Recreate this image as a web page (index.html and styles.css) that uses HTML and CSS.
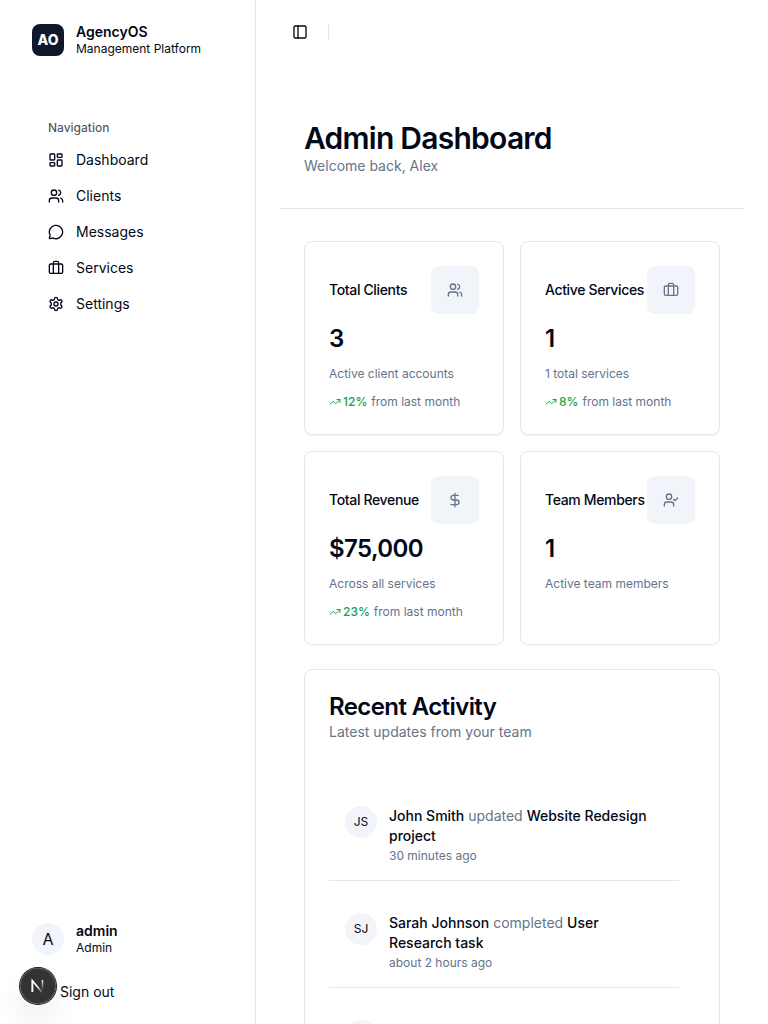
FILE: index.html
```html
<!DOCTYPE html>
<html lang="en">
<head>
<meta charset="utf-8">
<title>AgencyOS</title>
<link rel="stylesheet" href="styles.css">
</head>
<body>
<svg class="sprite" aria-hidden="true">
  <symbol id="dashboard" viewBox="0 0 24 24"><rect width="7" height="9" x="3" y="3" rx="1"/><rect width="7" height="5" x="14" y="3" rx="1"/><rect width="7" height="9" x="14" y="12" rx="1"/><rect width="7" height="5" x="3" y="16" rx="1"/></symbol>
  <symbol id="users" viewBox="0 0 24 24"><path d="M16 21v-2a4 4 0 0 0-4-4H6a4 4 0 0 0-4 4v2"/><circle cx="9" cy="7" r="4"/><path d="M22 21v-2a4 4 0 0 0-3-3.87"/><path d="M16 3.13a4 4 0 0 1 0 7.75"/></symbol>
  <symbol id="message" viewBox="0 0 24 24"><path d="M2.992 16.342a2 2 0 0 1 .094 1.167l-1.065 3.290a1 1 0 0 0 1.236 1.168l3.413-.998a2 2 0 0 1 1.099.092 10 10 0 1 0-4.777-4.719"/></symbol>
  <symbol id="briefcase" viewBox="0 0 24 24"><path d="M16 20V4a2 2 0 0 0-2-2h-4a2 2 0 0 0-2 2v16"/><rect width="20" height="14" x="2" y="6" rx="2"/></symbol>
  <symbol id="settings" viewBox="0 0 24 24"><path d="M12.22 2h-.44a2 2 0 0 0-2 2v.18a2 2 0 0 1-1 1.73l-.43.25a2 2 0 0 1-2 0l-.15-.08a2 2 0 0 0-2.73.73l-.22.38a2 2 0 0 0 .73 2.73l.15.1a2 2 0 0 1 1 1.72v.51a2 2 0 0 1-1 1.74l-.15.09a2 2 0 0 0-.73 2.73l.22.38a2 2 0 0 0 2.73.73l.15-.08a2 2 0 0 1 2 0l.43.25a2 2 0 0 1 1 1.73V20a2 2 0 0 0 2 2h.44a2 2 0 0 0 2-2v-.18a2 2 0 0 1 1-1.73l.43-.25a2 2 0 0 1 2 0l.15.08a2 2 0 0 0 2.73-.73l.22-.39a2 2 0 0 0-.73-2.73l-.15-.08a2 2 0 0 1-1-1.74v-.5a2 2 0 0 1 1-1.74l.15-.09a2 2 0 0 0 .73-2.73l-.22-.38a2 2 0 0 0-2.73-.73l-.15.08a2 2 0 0 1-2 0l-.43-.25a2 2 0 0 1-1-1.73V4a2 2 0 0 0-2-2z"/><circle cx="12" cy="12" r="3"/></symbol>
  <symbol id="panel" viewBox="0 0 24 24"><rect width="18" height="18" x="3" y="3" rx="2"/><path d="M9 3v18"/></symbol>
  <symbol id="dollar" viewBox="0 0 24 24"><path d="M12 2v20"/><path d="M17 5H9.5a3.5 3.5 0 0 0 0 7h5a3.5 3.5 0 0 1 0 7H6"/></symbol>
  <symbol id="user-check" viewBox="0 0 24 24"><path d="m16 11 2 2 4-4"/><path d="M16 21v-2a4 4 0 0 0-4-4H6a4 4 0 0 0-4 4v2"/><circle cx="9" cy="7" r="4"/></symbol>
  <symbol id="trend" viewBox="0 0 24 24"><path d="M22 7 13.5 15.500 8.500 10.500 2 17"/><path d="M16 7h6v6"/></symbol>
</svg>
<div class="app">
  <aside class="sidebar">
    <div class="brand">
      <div class="logo">AO</div>
      <div class="identity"><span class="name">AgencyOS</span><span class="caption">Management Platform</span></div>
    </div>
    <nav class="nav">
      <div class="nav-label">Navigation</div>
      <a class="nav-item"><svg class="icon"><use href="#dashboard"/></svg>Dashboard</a>
      <a class="nav-item"><svg class="icon"><use href="#users"/></svg>Clients</a>
      <a class="nav-item"><svg class="icon"><use href="#message"/></svg>Messages</a>
      <a class="nav-item"><svg class="icon"><use href="#briefcase"/></svg>Services</a>
      <a class="nav-item"><svg class="icon"><use href="#settings"/></svg>Settings</a>
    </nav>
    <div class="account">
      <div class="account-user">
        <div class="avatar avatar-large">A</div>
        <div class="identity"><span class="name">admin</span><span class="caption">Admin</span></div>
      </div>
      <a class="sign-out">Sign out</a>
    </div>
  </aside>
  <main class="main">
    <header class="topbar"><svg class="icon"><use href="#panel"/></svg><span class="divider"></span></header>
    <section class="page-head"><h1>Admin Dashboard</h1><p>Welcome back, Alex</p></section>
    <div class="content">
      <section class="stats">
        <article class="card stat">
          <div class="stat-head"><h3>Total Clients</h3><div class="tile"><svg class="icon"><use href="#users"/></svg></div></div>
          <div class="value">3</div><p class="note">Active client accounts</p>
          <p class="trend"><svg class="icon"><use href="#trend"/></svg><b>12%</b><span>from last month</span></p>
        </article>
        <article class="card stat">
          <div class="stat-head"><h3>Active Services</h3><div class="tile"><svg class="icon"><use href="#briefcase"/></svg></div></div>
          <div class="value">1</div><p class="note">1 total services</p>
          <p class="trend"><svg class="icon"><use href="#trend"/></svg><b>8%</b><span>from last month</span></p>
        </article>
        <article class="card stat">
          <div class="stat-head"><h3>Total Revenue</h3><div class="tile"><svg class="icon"><use href="#dollar"/></svg></div></div>
          <div class="value">$75,000</div><p class="note">Across all services</p>
          <p class="trend"><svg class="icon"><use href="#trend"/></svg><b>23%</b><span>from last month</span></p>
        </article>
        <article class="card stat">
          <div class="stat-head"><h3>Team Members</h3><div class="tile"><svg class="icon"><use href="#user-check"/></svg></div></div>
          <div class="value">1</div><p class="note">Active team members</p>
        </article>
      </section>
      <section class="card activity">
        <h2>Recent Activity</h2>
        <p class="subtitle">Latest updates from your team</p>
        <ul class="feed">
          <li class="event"><div class="avatar">JS</div><div><p class="event-text"><b>John Smith</b> updated <b>Website Redesign project</b></p><p class="time">30 minutes ago</p></div></li>
          <li class="event"><div class="avatar">SJ</div><div><p class="event-text"><b>Sarah Johnson</b> completed <b>User Research task</b></p><p class="time">about 2 hours ago</p></div></li>
          <li class="event"><div class="avatar"></div></li>
        </ul>
      </section>
    </div>
  </main>
</div>
<div class="dev-badge">
  <svg width="36" height="36" viewBox="2 2 36 36" fill="none">
    <defs>
      <linearGradient id="diagonal" x1="20" y1="20" x2="25" y2="27" gradientUnits="userSpaceOnUse"><stop stop-color="#fff"/><stop offset="1" stop-color="#fff" stop-opacity="0"/></linearGradient>
      <linearGradient id="stem" x1="24" y1="14" x2="24" y2="24" gradientUnits="userSpaceOnUse"><stop stop-color="#fff"/><stop offset="1" stop-color="#fff" stop-opacity="0"/></linearGradient>
    </defs>
    <path d="M14.400 26V14.800L24.600 27" stroke="url(#diagonal)" stroke-width="1.600"/>
    <path d="M14.400 26V14" stroke="#fff" stroke-width="1.500"/>
    <path d="M24.500 14v10" stroke="url(#stem)" stroke-width="1.500"/>
  </svg>
</div>
</body>
</html>
```

FILE: styles.css
```css
* { box-sizing: border-box; margin: 0; padding: 0; }

body {
  height: 1024px;
  overflow: hidden;
  background: #fff;
  color: #020817;
  font: 14px/20px Inter, sans-serif;
}

.sprite { display: none; }

.icon {
  width: 16px;
  height: 16px;
  flex: none;
  fill: none;
  stroke: currentColor;
  stroke-width: 2;
  stroke-linecap: round;
  stroke-linejoin: round;
}

.app { display: flex; height: 1024px; overflow: hidden; }

.sidebar {
  width: 256px;
  flex: none;
  display: flex;
  flex-direction: column;
  border-right: 1px solid #e2e8f0;
}

.brand, .account-user { display: flex; align-items: center; gap: 12px; }
.brand { height: 32px; margin: 24px 32px 0; }

.logo {
  width: 32px;
  height: 32px;
  display: grid;
  place-items: center;
  border-radius: 8px;
  background: #0f172a;
  color: #f8fafc;
  font-weight: 800;
}

.identity { display: flex; flex-direction: column; }
.name { font-weight: 600; line-height: 18px; }
.caption { font-size: 12px; line-height: 16px; }
.brand .identity { margin-top: -2px; }
.brand .name { padding-top: 2px; line-height: 16px; }
.brand .caption { margin-top: 1px; margin-bottom: -1px; }

.nav { padding: 60px 48px 0; }
.nav-label { font-size: 12px; line-height: 24px; font-weight: 500; color: rgba(2, 8, 23, .7); margin-bottom: 4px; }
.nav-item { display: flex; align-items: center; gap: 12px; height: 32px; margin-bottom: 4px; }

.account { margin-top: auto; padding: 0 32px 22px; }
.account .name { line-height: 16px; margin-bottom: 1px; }
.sign-out { display: block; margin-top: 26px; padding-left: 28px; }

.avatar {
  width: 32px;
  height: 32px;
  flex: none;
  display: grid;
  place-items: center;
  border-radius: 50%;
  background: #f1f5f9;
  font-size: 12px;
}
.avatar-large { font-size: 16px; margin-top: -1px; }

.main { flex: 1; padding: 0 24px; }
.topbar { display: flex; align-items: center; gap: 20px; height: 64px; padding-left: 12px; }
.divider { width: 1px; height: 16px; background: #e2e8f0; }

.page-head { padding: 57px 24px 32px; border-bottom: 1px solid #e2e8f0; }
h1 { font-size: 30px; line-height: 34px; margin-bottom: 1px; font-weight: 600; letter-spacing: -.025em; }
.page-head p, .subtitle { color: #64748b; }

.content { display: flex; flex-direction: column; gap: 24px; padding: 32px 24px 0; }
.stats { display: grid; grid-template-columns: 1fr 1fr; gap: 16px; }

.card {
  border: 1px solid #e2e8f0;
  border-radius: 8px;
  padding: 24px;
  box-shadow: 0 1px 2px rgba(0, 0, 0, .05);
}

.stat { height: 194px; }
.stat-head { display: flex; align-items: center; justify-content: space-between; margin-bottom: 9px; }
h3 { font-size: 14px; font-weight: 500; letter-spacing: -.025em; white-space: nowrap; }
.tile { width: 48px; height: 48px; flex: none; display: grid; place-items: center; border-radius: 8px; background: #f1f5f9; color: #64748b; }
.value { font-size: 24px; line-height: 32px; font-weight: 600; letter-spacing: -.025em; }
.note, .trend, .time { font-size: 12px; line-height: 16px; color: #64748b; }
.note { margin: 11px 0 12px; }
.trend { display: flex; align-items: center; white-space: nowrap; }
.trend .icon { width: 12px; height: 12px; margin-right: 2px; color: #16a34a; }
.trend b { font-weight: 500; color: #16a34a; margin-right: 4px; }

.activity { height: 500px; }
h2 { padding-top: 1px; font-size: 24px; line-height: 24px; font-weight: 600; letter-spacing: -.025em; margin-bottom: 3px; }
.feed { list-style: none; width: 350px; margin-top: 48px; }
.event { display: flex; gap: 12px; padding: 16px; margin-bottom: 16px; border-bottom: 1px solid #e2e8f0; }
.event-text { color: #64748b; }
.event-text b { font-weight: 500; color: #020817; }
.time { margin-top: 2px; }

.dev-badge {
  position: fixed;
  left: 20px;
  bottom: 20px;
  width: 36px;
  height: 36px;
  display: grid;
  place-items: center;
  border-radius: 50%;
  background: rgba(0, 0, 0, .8);
  box-shadow: 0 0 0 1px #171717, inset 0 0 0 1px rgba(255, 255, 255, .14), 0 16px 32px -8px rgba(0, 0, 0, .24);
}
```
